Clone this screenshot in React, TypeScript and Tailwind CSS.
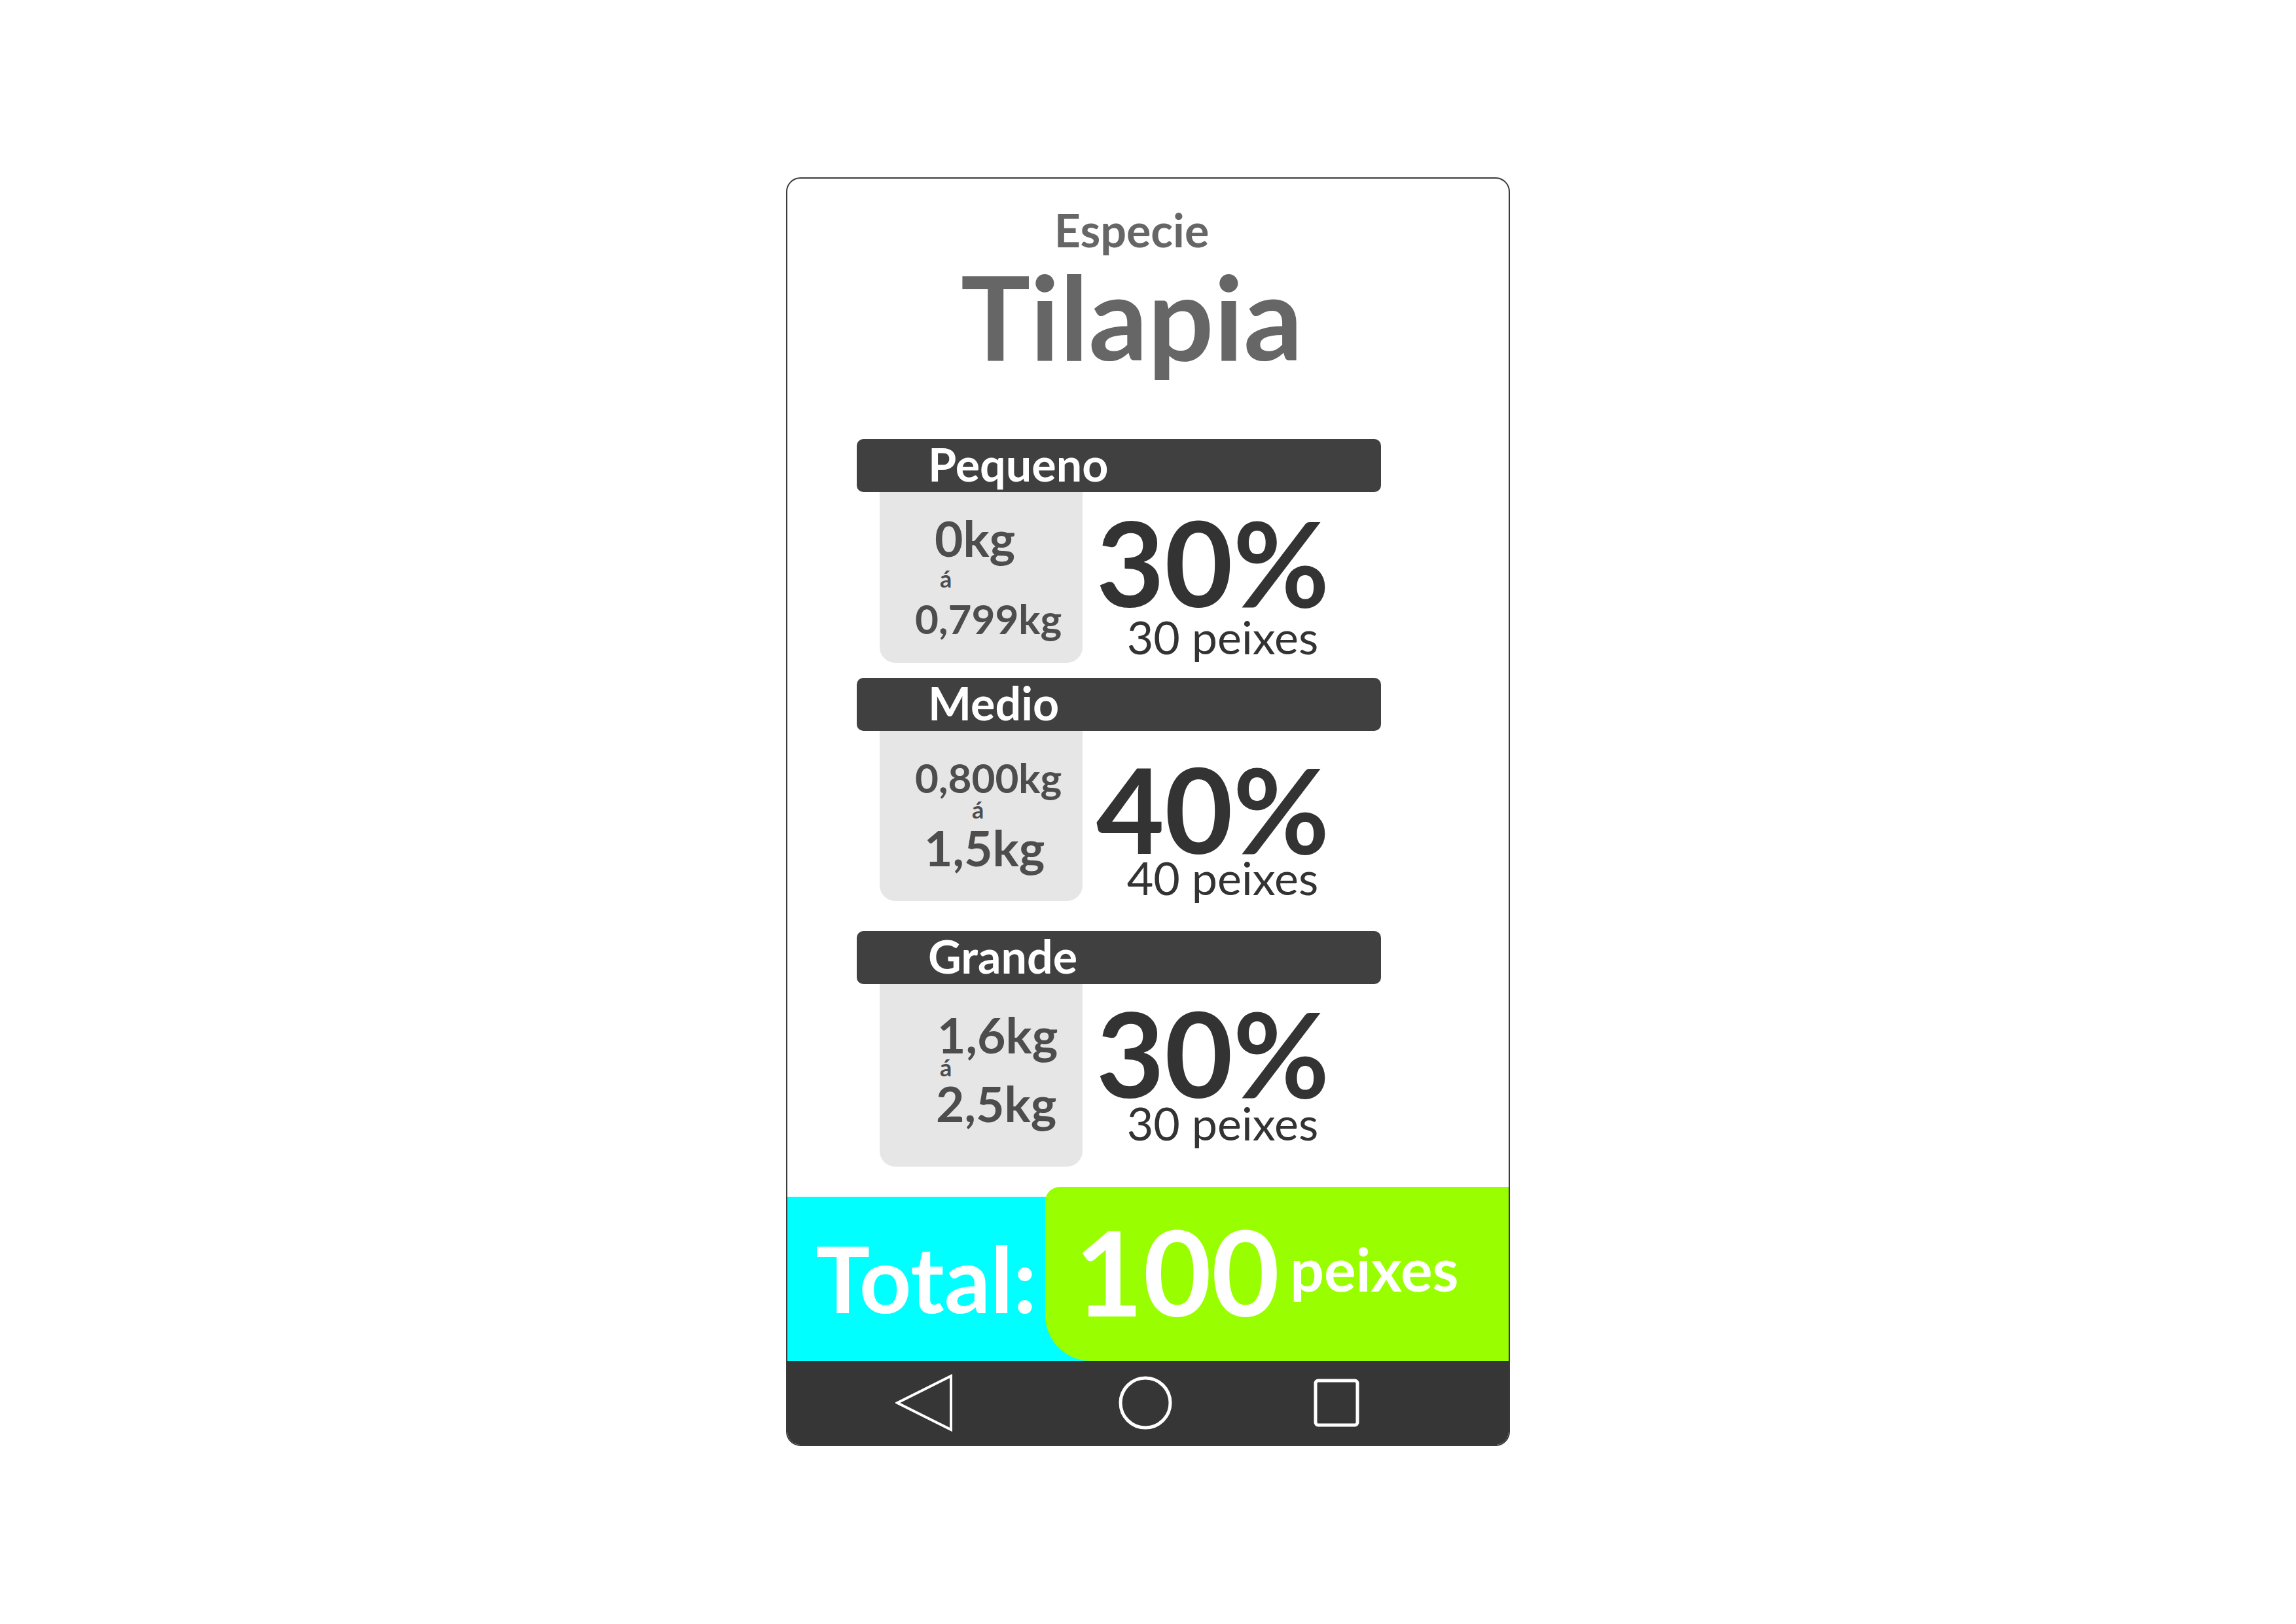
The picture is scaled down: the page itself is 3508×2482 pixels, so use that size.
const font = { fontFamily: 'Lato, "Open Sans", sans-serif' };

interface Line {
  text: string;
  cls: string;
}

interface SizeClass {
  label: string;
  boxH: string;
  after: string;
  lines: Line[];
  pct: string;
  pctTop: string;
  count: string;
  countTop: string;
}

const sizes: SizeClass[] = [
  {
    label: 'Pequeno',
    boxH: 'h-[261px]',
    after: 'h-[23px]',
    lines: [
      { text: '0kg', cls: 'text-[75px] leading-none mt-[33px] ml-[84px]' },
      { text: 'á', cls: 'text-[36px] leading-[0.7] mt-[12px] ml-[92px]' },
      { text: '0,799kg', cls: 'text-[62px] leading-none mt-[17px] ml-[54px]' },
    ],
    pct: '30%',
    pctTop: 'mt-[39px]',
    count: '30 peixes',
    countTop: 'mt-[12px]',
  },
  {
    label: 'Medio',
    boxH: 'h-[260px]',
    after: 'h-[46px]',
    lines: [
      { text: '0,800kg', cls: 'text-[62px] leading-none mt-[40px] ml-[54px]' },
      { text: 'á', cls: 'text-[36px] leading-[0.7] mt-[6px] ml-[141px]' },
      { text: '1,5kg', cls: 'text-[75px] leading-none mt-[8px] ml-[68px]' },
    ],
    pct: '40%',
    pctTop: 'mt-[51px]',
    count: '40 peixes',
    countTop: 'mt-[3px]',
  },
  {
    label: 'Grande',
    boxH: 'h-[279px]',
    after: 'h-[31px]',
    lines: [
      { text: '1,6kg', cls: 'text-[75px] leading-none mt-[40px] ml-[88px]' },
      { text: 'á', cls: 'text-[36px] leading-[0.7] mt-0 ml-[92px]' },
      { text: '2,5kg', cls: 'text-[75px] leading-none mt-[5px] ml-[86px]' },
    ],
    pct: '30%',
    pctTop: 'mt-[37px]',
    count: '30 peixes',
    countTop: 'mt-[5px]',
  },
];

function SizeBlock({ s }: { s: SizeClass }) {
  return (
    <div className="flex flex-col">
      <div className="h-[81px] w-[801px] rounded-[10px] bg-[#404040] pl-[109px] pt-[3px]">
        <span className="block text-[70px] font-bold leading-none text-white">{s.label}</span>
      </div>
      <div className="flex">
        <div className={`ml-[35px] flex w-[310px] flex-col rounded-b-[24px] bg-[#e6e6e6] ${s.boxH}`}>
          {s.lines.map((l, i) => (
            <span key={i} className={`block font-bold text-[#4d4d4d] ${l.cls}`}>
              {l.text}
            </span>
          ))}
        </div>
        <div className="flex w-[412px] flex-col items-center text-[#333333]">
          <span className={`mr-[14px] block text-[180px] font-bold leading-[0.75] ${s.pctTop}`}>{s.pct}</span>
          <span className={`ml-[16px] block text-[70px] font-normal leading-none ${s.countTop}`}>{s.count}</span>
        </div>
      </div>
      <div className={s.after} />
    </div>
  );
}

export default function App() {
  return (
    <div className="flex h-[2482px] w-[3508px] justify-center bg-white pt-[271px]" style={font}>
      <div className="flex h-[1939px] w-[1106px] flex-col overflow-hidden rounded-[22px] border-2 border-[#3a3a3a] bg-white">
        {/* header */}
        <div className="flex h-[398px] flex-col items-center pr-[50px] pt-[43px] text-[#666666]">
          <span className="block text-[70px] font-bold leading-none">Especie</span>
          <span className="mt-[7px] block text-[178px] font-bold leading-none">Tilapia</span>
        </div>

        <div className="flex flex-col pl-[106px]">
          {sizes.map((s) => (
            <SizeBlock key={s.label} s={s} />
          ))}
        </div>

        {/* total */}
        <div className="flex h-[266px] bg-[linear-gradient(to_bottom,#ffffff_15px,#00ffff_15px)]">
          <div className="w-[394px] pl-[43px] pt-[70px]">
            <span className="block text-[139px] font-bold leading-none text-white">Total:</span>
          </div>
          <div className="flex flex-1 items-start rounded-bl-[70px] rounded-tl-[22px] bg-[#99ff00] pl-[45px] text-white">
            <span className="mt-[38px] block text-[180px] font-bold leading-none">100</span>
            <span className="ml-[16px] mt-[79px] block text-[91px] font-bold leading-none">peixes</span>
          </div>
        </div>

        {/* nav bar */}
        <div className="flex h-[128px] items-center bg-[#363636] pl-[165px]">
          <svg width="88" height="88" viewBox="0 0 88 88">
            <polygon points="3,44 85,3 85,85" fill="none" stroke="white" strokeWidth="4" strokeLinejoin="miter" />
          </svg>
          <svg width="84" height="84" viewBox="0 0 84 84" className="ml-[252px]">
            <circle cx="42" cy="42" r="38" fill="none" stroke="white" strokeWidth="5" />
          </svg>
          <svg width="76" height="76" viewBox="0 0 76 76" className="ml-[212px]">
            <rect x="6" y="4" width="64" height="68" rx="4" fill="none" stroke="white" strokeWidth="5" />
          </svg>
        </div>
      </div>
    </div>
  );
}
